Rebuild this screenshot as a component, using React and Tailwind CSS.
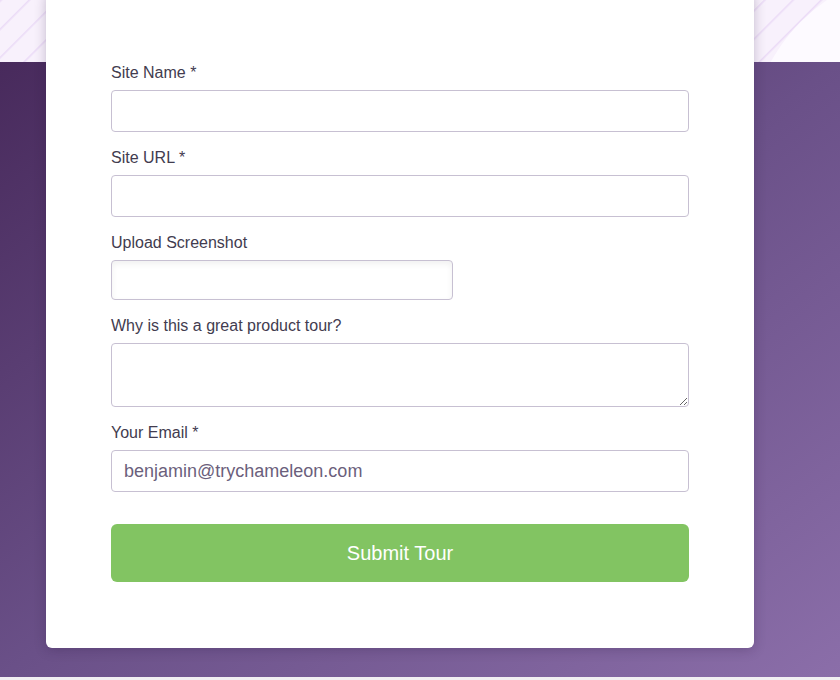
import React from "react";

const fieldClass =
  "block w-full rounded border border-[#c7c0d2] bg-white px-3 text-[18px] text-[#6b5f7c] outline-none";

function Label({ children }) {
  return <label className="block text-[16px] leading-[26px] text-[#423c4f] mb-1">{children}</label>;
}

function TopBand() {
  return (
    <svg className="absolute left-0 top-0 w-full h-[62px]" viewBox="0 0 840 62" preserveAspectRatio="none">
      <defs>
        <pattern id="stripes" width="20" height="20" patternUnits="userSpaceOnUse" patternTransform="rotate(45)">
          <rect width="20" height="20" fill="#f8f1fc" />
          <rect x="0" y="0" width="1.6" height="20" fill="#ecdcf7" />
        </pattern>
      </defs>
      <rect width="840" height="62" fill="url(#stripes)" />
      <circle cx="930" cy="150" r="182" fill="#fdfaff" />
    </svg>
  );
}

export default function App() {
  return (
    <div className="relative h-[680px] w-full overflow-hidden bg-[#f1eff2]" style={{ fontFamily: '"Liberation Sans", Arial, sans-serif' }}>
      <TopBand />
      {/* purple section under the card */}
      <div className="absolute left-0 right-0 top-[62px] bottom-[3px] bg-gradient-to-br from-[#482a5c] via-[#6a5088] to-[#8b6ea9]" />

      <div className="relative -mt-[8px] mx-[46px] w-[708px] rounded-md bg-white shadow-[0_2px_12px_rgba(40,20,60,0.25)] px-[65px] pt-[68px] pb-[66px]">
        <form className="flex flex-col" onSubmit={(e) => e.preventDefault()}>
          <Label>Site Name *</Label>
          <input className={`${fieldClass} h-[42px]`} />

          <div className="mt-[13px]">
            <Label>Site URL *</Label>
            <input className={`${fieldClass} h-[42px]`} />
          </div>

          <div className="mt-[13px]">
            <Label>Upload Screenshot</Label>
            <div className="h-[40px] w-[342px] rounded border border-[#c7c0d2] bg-white shadow-[inset_0_3px_6px_rgba(0,0,0,0.06)]" />
          </div>

          <div className="mt-[13px]">
            <Label>Why is this a great product tour?</Label>
            <textarea className={`${fieldClass} h-[64px] py-2`} />
          </div>

          <div className="mt-[13px]">
            <Label>Your Email *</Label>
            <input className={`${fieldClass} h-[42px]`} defaultValue="benjamin@trychameleon.com" />
          </div>

          <button
            type="submit"
            className="mt-[32px] h-[58px] w-full rounded-md bg-[#82c462] text-[20px] text-white"
          >
            Submit Tour
          </button>
        </form>
      </div>
    </div>
  );
}
